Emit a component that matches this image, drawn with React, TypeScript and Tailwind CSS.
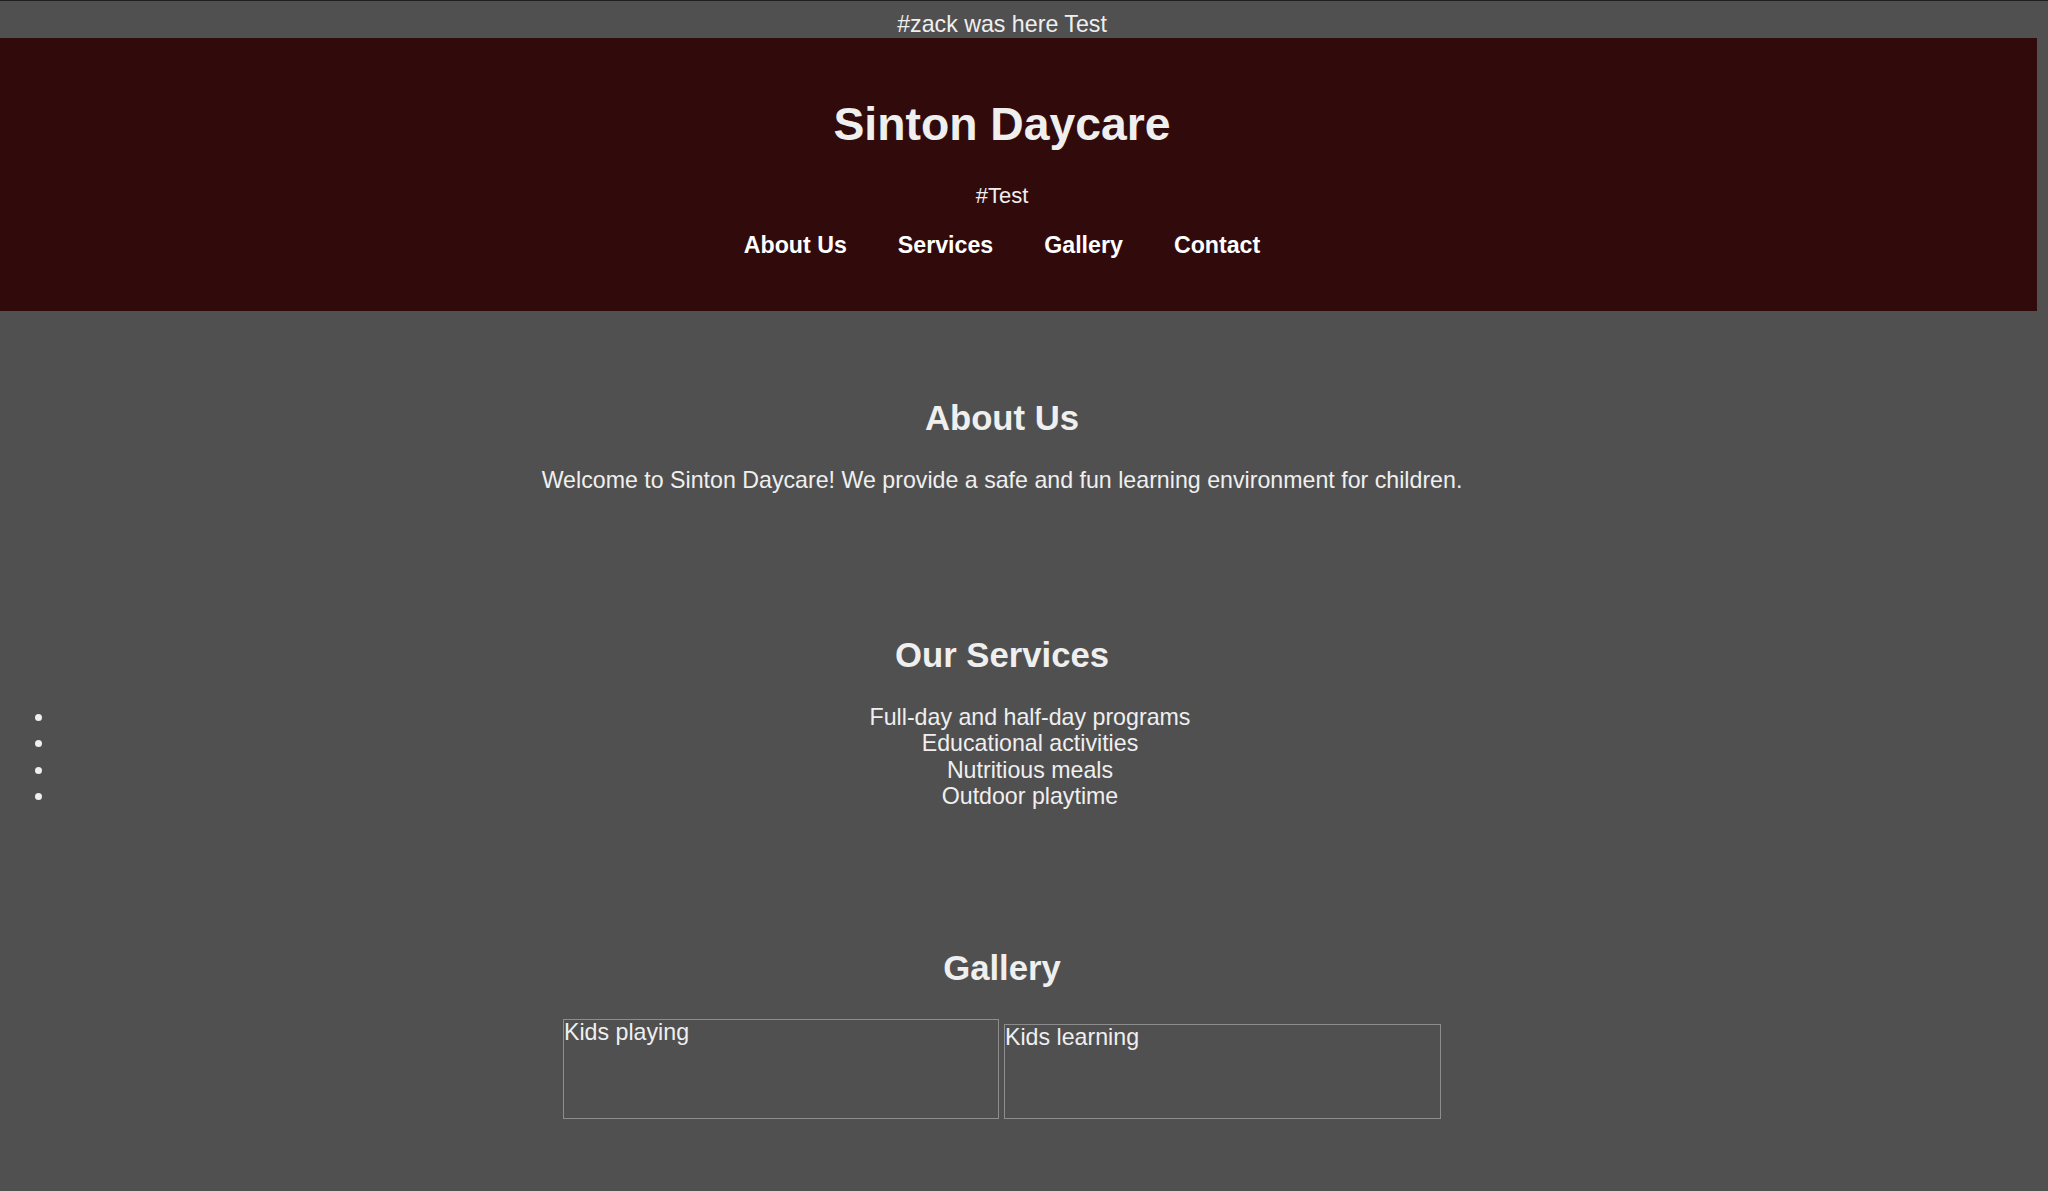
import React from 'react';

const services = [
  'Full-day and half-day programs',
  'Educational activities',
  'Nutritious meals',
  'Outdoor playtime',
];

const navLinks = ['About Us', 'Services', 'Gallery', 'Contact'];

export default function App() {
  return (
    <div
      className="min-h-[1191px] w-[2048px] overflow-hidden border-t border-[#1f1f1f] bg-[#515050] text-[23.2px] leading-[1.149] text-[#efefef]"
      style={{ fontFamily: '"Liberation Sans", Arial, Helvetica, sans-serif' }}
    >
      {/* Top banner */}
      <div className="w-[2004px] pt-[10px] text-center">#zack was here Test</div>

      {/* Header */}
      <header className="w-[2037px] bg-[#310b0c] pt-[60px] pb-[52px]">
        <div className="w-[2004px] text-center">
          <h1 className="text-[46.3px] font-bold leading-[1.149]">Sinton Daycare</h1>
          <p className="mt-[32px] text-[22px]">#Test</p>
          <nav className="mt-[24px] flex justify-center gap-[51px] font-bold">
            {navLinks.map((link) => (
              <a key={link} href="#" className="text-white">
                {link}
              </a>
            ))}
          </nav>
        </div>
      </header>

      {/* About Us */}
      <section className="w-[2004px] pt-[88px] text-center">
        <h2 className="text-[34.7px] font-bold leading-[1.149]">About Us</h2>
        <p className="mt-[28px]">
          Welcome to Sinton Daycare! We provide a safe and fun learning environment for children.
        </p>
      </section>

      {/* Services */}
      <section className="w-[2004px] pt-[143px] text-center">
        <h2 className="text-[34.7px] font-bold leading-[1.149]">Our Services</h2>
        <ul className="mt-[28px] list-outside list-disc pl-[56px]">
          {services.map((item) => (
            <li key={item} className="leading-[26.2px]">
              {item}
            </li>
          ))}
        </ul>
      </section>

      {/* Gallery */}
      <section className="w-[2004px] pt-[140px] text-center">
        <h2 className="text-[34.7px] font-bold leading-[1.149]">Gallery</h2>
        <div className="mt-[30px] flex items-end justify-center gap-[5px]">
          <div className="h-[100px] w-[436px] border border-[#8d8d8d] text-left leading-[1.1]">
            Kids playing
          </div>
          <div className="h-[95px] w-[437px] border border-[#8d8d8d] text-left leading-[1.1]">
            Kids learning
          </div>
        </div>
      </section>
    </div>
  );
}
